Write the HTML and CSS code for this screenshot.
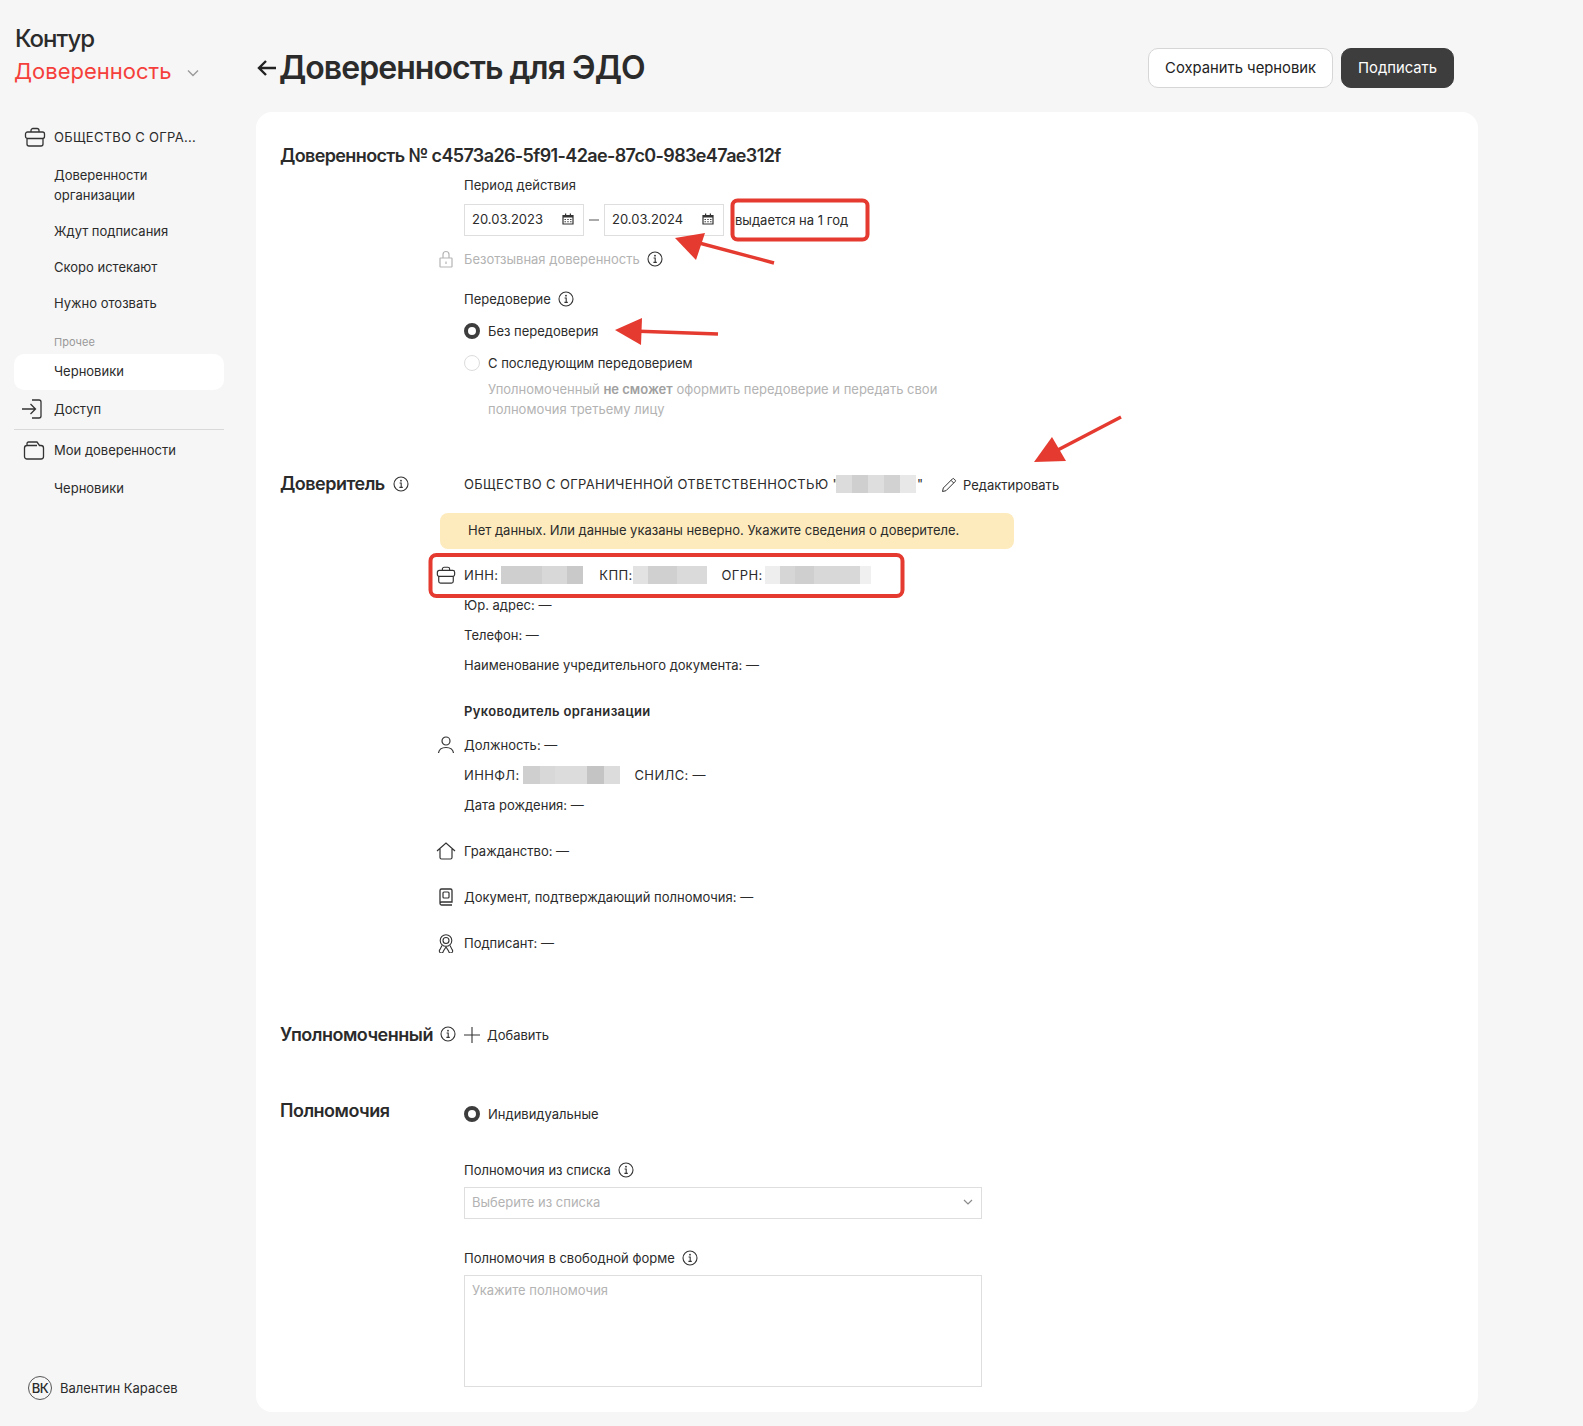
FILE: index.html
```html
<!DOCTYPE html>
<html lang="ru">
<head>
<meta charset="utf-8">
<title>Доверенность для ЭДО</title>
<link rel="stylesheet" href="styles.css">
</head>
<body>
<svg width="0" height="0" class="defs">
  <defs>
    <symbol id="i-info" viewBox="0 0 16 16"><circle cx="8" cy="8" r="7" fill="none" stroke="currentColor" stroke-width="1.1"/><path d="M6.6 7h1.6v4.2M6.4 11.4h3.4" fill="none" stroke="currentColor" stroke-width="1.1"/><circle cx="8" cy="4.7" r=".9" fill="currentColor"/></symbol>
    <symbol id="i-case" viewBox="0 0 22 22"><path d="M7 6V4.5A2 2 0 0 1 9 2.5h4a2 2 0 0 1 2 2V6M3.5 6h15a2 2 0 0 1 2 2v2.500a2 2 0 0 1-2 2h-15a2 2 0 0 1-2-2V8a2 2 0 0 1 2-2ZM3 12.300V18a2 2 0 0 0 2 2h12a2 2 0 0 0 2-2v-5.700" fill="none" stroke="currentColor" stroke-width="1.300"/></symbol>
    <symbol id="i-cal" viewBox="0 0 12 12"><path d="M1 2.500h10V11H1z" fill="#fff" stroke="currentColor" stroke-width="1.200"/><path d="M1 2h10v2.500H1zM3 .5h1.200V3H3zM7.800 .5H9V3H7.800z" fill="currentColor"/><path d="M2.500 6h1.400v1H2.500zM5.300 6h1.400v1H5.300zM8.100 6h1.400v1H8.100zM2.500 8.300h1.400v1H2.500zM5.300 8.300h1.400v1H5.300zM8.100 8.300h1.400v1H8.100z" fill="currentColor"/></symbol>
  </defs>
</svg>

<div class="app">
  <aside class="side">
    <div class="brand">Контур</div>
    <div class="product">
      <span>Доверенность</span>
      <svg class="product-chevron" width="12" height="8" viewBox="0 0 12 8"><path d="M1 1.500l5 5 5-5" fill="none" stroke="#9a9a9a" stroke-width="1.400"/></svg>
    </div>
    <div class="nav-head nav-head--org"><svg class="nav-icon" width="22" height="22"><use href="#i-case"/></svg><span class="caps caps--side">ОБЩЕСТВО С ОГРА...</span></div>
    <div class="nav-item nav-item--first">Доверенности организации</div>
    <div class="nav-item nav-item--next">Ждут подписания</div>
    <div class="nav-item nav-item--next">Скоро истекают</div>
    <div class="nav-item nav-item--next">Нужно отозвать</div>
    <div class="nav-caption">Прочее</div>
    <div class="nav-active">Черновики</div>
    <div class="nav-head nav-head--access">
      <svg class="nav-icon" width="22" height="22" viewBox="0 0 22 22"><path d="M1 11h13M9.500 6l5 5-5 5M11 2h7a2 2 0 0 1 2 2v14a2 2 0 0 1-2 2h-7" fill="none" stroke="currentColor" stroke-width="1.300"/></svg>
      <span>Доступ</span>
    </div>
    <div class="nav-divider"></div>
    <div class="nav-head">
      <svg class="nav-icon" width="22" height="22" viewBox="0 0 22 22"><path d="M4 7V4.500A1.500 1.500 0 0 1 5.500 3h8.500l2.500 3.500H18a2.500 2.500 0 0 1 2.500 2.500v8.500A2.500 2.500 0 0 1 18 20H4a2.500 2.500 0 0 1-2.500-2.500V9A2.500 2.500 0 0 1 4 6.500h10" fill="none" stroke="currentColor" stroke-width="1.300"/></svg>
      <span>Мои доверенности</span>
    </div>
    <div class="nav-item nav-item--last">Черновики</div>
    <div class="user"><span class="avatar">ВК</span><span>Валентин Карасев</span></div>
  </aside>

  <main class="main">
    <header class="top">
      <svg class="back" width="21" height="18" viewBox="0 0 21 18"><path d="M20 9H3M10 2L3 9l7 7" fill="none" stroke="#222" stroke-width="2.400"/></svg>
      <h1 class="title">Доверенность для ЭДО</h1>
      <div class="actions">
        <button class="btn">Сохранить черновик</button>
        <button class="btn btn--dark">Подписать</button>
      </div>
    </header>

    <section class="card">
      <h2 class="doc-no">Доверенность № c4573a26-5f91-42ae-87c0-983e47ae312f</h2>

      <div class="offset">
        <div class="label label--period">Период действия</div>
        <div class="dates">
          <div class="date"><span>20.03.2023</span><svg class="cal" width="12" height="12"><use href="#i-cal"/></svg></div>
          <span class="dash"></span>
          <div class="date"><span>20.03.2024</span><svg class="cal" width="12" height="12"><use href="#i-cal"/></svg></div>
          <span class="term">выдается на 1 год</span>
        </div>
        <div class="row row--icon row--irrevocable">
          <svg class="row-icon row-icon--muted" width="20" height="20" viewBox="0 0 20 20"><path d="M7 9V5.500a3 3 0 0 1 6 0V9M4.500 9h11a.5.5 0 0 1 .5.500v8a.5.5 0 0 1-.5.500h-11a.5.5 0 0 1-.5-.500v-8a.5.5 0 0 1 .5-.500ZM10 12.500v2.500" fill="none" stroke="currentColor" stroke-width="1.200"/></svg>
          <span class="muted">Безотзывная доверенность</span>
          <svg class="info info--near" width="16" height="16"><use href="#i-info"/></svg>
        </div>
        <div class="label label--trust">Передоверие<svg class="info info--near" width="16" height="16"><use href="#i-info"/></svg></div>
        <div class="radio-row radio-row--a"><span class="radio radio--on"></span><span>Без передоверия</span></div>
        <div class="radio-row radio-row--b"><span class="radio"></span><span>С последующим передоверием</span></div>
        <p class="hint">Уполномоченный <b>не сможет</b> оформить передоверие и передать свои<br>полномочия третьему лицу</p>
      </div>

      <div class="section section--principal">
        <div class="sec-title"><h3 class="h3">Доверитель</h3><svg class="info" width="16" height="16"><use href="#i-info"/></svg></div>
        <div class="sec-body">
          <div class="org-line">
            <span class="caps">ОБЩЕСТВО С ОГРАНИЧЕННОЙ ОТВЕТСТВЕННОСТЬЮ "</span><span class="blur blur--org"></span><span class="quote">"</span>
            <svg class="pencil" width="16" height="16" viewBox="0 0 16 16"><path d="M1.500 14.500l.8-3.500L11.500 1.800a1 1 0 0 1 1.400 0l1.300 1.300a1 1 0 0 1 0 1.400L5 13.700l-3.500.8ZM10 3.300l2.700 2.700" fill="none" stroke="#333" stroke-width="1"/></svg>
            <span class="edit">Редактировать</span>
          </div>
          <div class="warn">Нет данных. Или данные указаны неверно. Укажите сведения о доверителе.</div>
          <div class="row row--icon row--ids">
            <svg class="row-icon" width="20" height="20"><use href="#i-case"/></svg>
            <span class="caps">ИНН:</span><span class="blur blur--inn"></span>
            <span class="caps kpp">КПП:</span><span class="blur blur--kpp"></span>
            <span class="caps ogrn">ОГРН:</span><span class="blur blur--ogrn"></span>
          </div>
          <div class="row row--gap10">Юр. адрес: —</div>
          <div class="row row--gap10">Телефон: —</div>
          <div class="row row--gap10">Наименование учредительного документа: —</div>
          <div class="row row--boss"><b class="semi">Руководитель организации</b></div>
          <div class="row row--icon row--post">
            <svg class="row-icon" width="20" height="20" viewBox="0 0 20 20"><circle cx="10" cy="6" r="4" fill="none" stroke="currentColor" stroke-width="1.200"/><path d="M2.500 18c.5-3.800 3.500-5.500 7.500-5.500s7 1.700 7.500 5.500" fill="none" stroke="currentColor" stroke-width="1.200"/></svg>
            <span>Должность: —</span>
          </div>
          <div class="row row--gap10"><span class="caps">ИННФЛ:</span><span class="blur blur--innfl"></span><span class="caps snils">СНИЛС: —</span></div>
          <div class="row row--gap10">Дата рождения: —</div>
          <div class="row row--icon row--group">
            <svg class="row-icon" width="20" height="20" viewBox="0 0 20 20"><path d="M1 10l9-8 9 8M4 8v8.500A1.500 1.500 0 0 0 5.500 18h9a1.500 1.500 0 0 0 1.500-1.500V8" fill="none" stroke="currentColor" stroke-width="1.200"/></svg>
            <span>Гражданство: —</span>
          </div>
          <div class="row row--icon row--group">
            <svg class="row-icon" width="20" height="20" viewBox="0 0 20 20"><path d="M4 16V3.500A1.500 1.500 0 0 1 5.500 2h9A1.500 1.500 0 0 1 16 3.500V15H5.500A1.500 1.500 0 0 0 4 16.500 1.500 1.500 0 0 0 5.500 18H16" fill="none" stroke="currentColor" stroke-width="1.300"/><rect x="7" y="5" width="6" height="6" rx="1" fill="none" stroke="currentColor" stroke-width="1.200"/></svg>
            <span>Документ, подтверждающий полномочия: —</span>
          </div>
          <div class="row row--icon row--group">
            <svg class="row-icon" width="20" height="20" viewBox="0 0 20 20"><circle cx="10" cy="7.500" r="5.800" fill="none" stroke="currentColor" stroke-width="1.100"/><circle cx="10" cy="7.500" r="3" fill="none" stroke="currentColor" stroke-width="1.100"/><path d="M6 12.500L4 16.500a2 2 0 1 0 3.300 1.800L10 14l2.700 4.300a2 2 0 1 0 3.300-1.800l-2-4" fill="none" stroke="currentColor" stroke-width="1.100"/></svg>
            <span>Подписант: —</span>
          </div>
        </div>
      </div>

      <div class="section section--agent">
        <div class="sec-title"><h3 class="h3">Уполномоченный</h3><svg class="info info--agent" width="16" height="16"><use href="#i-info"/></svg></div>
        <div class="add">
          <svg width="16" height="16" viewBox="0 0 16 16"><path d="M8 0v16M0 8h16" stroke="#333" stroke-width="1.100"/></svg>
          <span>Добавить</span>
        </div>
      </div>

      <div class="section section--powers">
        <div class="sec-title"><h3 class="h3">Полномочия</h3></div>
        <div class="sec-body sec-body--powers">
          <div class="radio-row"><span class="radio radio--on"></span><span>Индивидуальные</span></div>
          <div class="label label--list">Полномочия из списка<svg class="info info--near" width="16" height="16"><use href="#i-info"/></svg></div>
          <div class="select"><span>Выберите из списка</span><svg width="10" height="6" viewBox="0 0 10 6"><path d="M1 1l4 4 4-4" fill="none" stroke="#8a8a8a" stroke-width="1.200"/></svg></div>
          <div class="label label--free">Полномочия в свободной форме<svg class="info info--near" width="16" height="16"><use href="#i-info"/></svg></div>
          <div class="textarea">Укажите полномочия</div>
        </div>
      </div>
    </section>
  </main>
</div>

<svg class="marks" width="1583" height="1426" viewBox="0 0 1583 1426">
  <rect x="732.500" y="200.500" width="135" height="39" rx="5" fill="none" stroke="#e53a2f" stroke-width="4"/>
  <rect x="430.500" y="555" width="472" height="41" rx="6" fill="none" stroke="#e53a2f" stroke-width="4"/>
  <path d="M774 263L688 240" stroke="#e53a2f" stroke-width="3.400"/>
  <polygon points="675,238 705,233 696,260" fill="#e53a2f"/>
  <path d="M718 334L632 331" stroke="#e53a2f" stroke-width="3.400"/>
  <polygon points="615,330 642,318 641,345" fill="#e53a2f"/>
  <path d="M1121 417L1052 453" stroke="#e53a2f" stroke-width="3.400"/>
  <polygon points="1034,462 1052,437 1066,461" fill="#e53a2f"/>
</svg>
</body>
</html>
```
FILE: styles.css
```css
* { box-sizing: border-box; }
html, body { margin: 0; padding: 0; }
body {
  position: relative;
  width: 1583px;
  height: 1426px;
  overflow: hidden;
  background: #f6f6f6;
  color: #2b2b2b;
  font: 13px/20px Inter, "Noto Sans", sans-serif;
}
.defs { position: absolute; }
.app { display: flex; height: 1426px; }
.caps { letter-spacing: .36px; }
.caps--side { letter-spacing: .28px; }

/* sidebar */
.side { width: 256px; flex: none; display: flex; flex-direction: column; padding: 23px 32px 26px 14px; }
.brand { font-size: 24px; line-height: 32px; font-weight: 500; letter-spacing: -1px; margin-left: 1px; }
.product { display: flex; align-items: center; font-size: 22px; line-height: 32px; color: #f53f3b; }
.product-chevron { margin-left: 16px; margin-top: 3px; }
.nav-head { display: flex; align-items: center; height: 20px; padding-left: 9px; gap: 9px; margin-top: 10px; }
.nav-head--org { margin-top: 40px; padding-left: 10px; gap: 8px; }
.nav-head--access { margin-top: 9px; padding-left: 7px; gap: 11px; }
.nav-icon { flex: none; color: #333; }
.nav-item { padding-left: 40px; padding-right: 50px; }
.nav-item--first { margin-top: 18px; }
.nav-item--next { margin-top: 16px; padding-right: 0; }
.nav-item--last { margin-top: 18px; padding-right: 0; }
.nav-caption { padding-left: 40px; margin-top: 19px; font-size: 11px; color: #999; }
.nav-active { margin-top: 2px; height: 36px; line-height: 34px; padding-left: 40px; background: #fff; border-radius: 10px; }
.nav-divider { height: 1px; background: #d9d9d9; margin-top: 10px; }
.user { margin-top: auto; display: flex; align-items: center; gap: 8px; padding-left: 14px; }
.avatar { width: 24px; height: 24px; border: 1px solid #555; border-radius: 50%; display: flex; align-items: center; justify-content: center; font-size: 13px; font-weight: 500; letter-spacing: -.4px; }

/* main */
.main { width: 1222px; flex: none; }
.top { display: flex; align-items: center; height: 40px; margin-top: 48px; margin-bottom: 24px; padding-right: 24px; }
.back { flex: none; margin-right: 2px; }
.title { margin: 0; font-size: 32px; line-height: 40px; font-weight: 600; letter-spacing: -.95px; }
.actions { margin-left: auto; display: flex; gap: 8px; }
.btn { height: 40px; padding: 0 16px; border: 1px solid #d6d6d6; border-radius: 10px; background: #fff; color: #222; font: 14.800px/20px Inter, sans-serif; }
.btn--dark { background: #3d3d3d; border-color: #3d3d3d; color: #fff; }

.card { background: #fff; border-radius: 16px; padding: 32px 24px 25px; }
.doc-no { margin: 0; font-size: 18px; line-height: 24px; font-weight: 600; letter-spacing: -.63px; }
.offset { padding-left: 184px; }
.label { display: flex; align-items: center; height: 20px; }
.label--period { margin-top: 7px; }
.label--trust { margin-top: 20px; }
.label--list { margin-top: 36px; }
.label--free { margin-top: 29px; }
.dates { display: flex; align-items: center; margin-top: 9px; }
.date { width: 120px; height: 32px; border: 1px solid #dedede; display: flex; align-items: center; justify-content: space-between; padding: 0 9px 2px 7px; }
.cal { color: #333; }
.dash { width: 10px; height: 2px; background: #aaa; margin: 0 5px; }
.term { margin-left: 11px; }
.row { display: flex; align-items: center; min-height: 20px; }
.row--icon { margin-left: -28px; }
.row-icon { flex: none; margin-right: 8px; color: #333; }
.row-icon--muted { color: #b5b5b5; }
.row--irrevocable { margin-top: 13px; }
.muted { color: #b3b3b3; }
.info { flex: none; color: #333; margin-left: 8px; }
.info--near { margin-left: 7px; }
.radio-row { display: flex; align-items: center; height: 20px; gap: 8px; }
.radio-row--a { margin-top: 12px; }
.radio-row--b { margin-top: 12px; }
.radio { width: 16px; height: 16px; border-radius: 50%; border: 1px solid #dcdcdc; background: #fff; flex: none; }
.radio--on { border: 4px solid #3d3d3d; }
.hint { margin: 6px 0 0 24px; color: #b3b3b3; }
.hint b { font-weight: 600; color: #a0a0a0; }

.section { display: grid; grid-template-columns: 184px 1fr; }
.section--principal { margin-top: 53px; }
.section--agent { margin-top: 70px; }
.section--powers { margin-top: 52px; }
.sec-title { display: flex; align-items: center; height: 24px; }
.h3 { margin: 0; font-size: 18px; line-height: 24px; font-weight: 600; letter-spacing: -.5px; }
.info--agent { margin-left: 7px; margin-top: -2px; }
.org-line { display: flex; align-items: center; height: 24px; }
.quote { margin-left: 1px; }
.pencil { margin-left: 18px; margin-top: 2px; flex: none; }
.edit { margin-left: 6px; margin-top: 2px; }
.blur { display: inline-block; height: 18px; }
.blur--org { width: 80px; margin-left: -3px; background: linear-gradient(90deg, #dcdcdc 0 20%, #cfcfcf 20% 40%, #dedede 40% 60%, #d2d2d2 60% 80%, #e8e8e8 80%); }
.blur--inn { width: 82px; margin-left: 3px; background: linear-gradient(90deg, #cfcfcf 0 50%, #d8d8d8 50% 80%, #c9c9c9 80%); }
.blur--kpp { width: 74px; background: linear-gradient(90deg, #e2e2e2 0 20%, #d0d0d0 20% 60%, #dadada 60%); }
.blur--ogrn { width: 106px; margin-left: 2px; background: linear-gradient(90deg, #eeeeee 0 14%, #d6d6d6 14% 28%, #cfcfcf 28% 46%, #d8d8d8 46% 90%, #f0f0f0 90%); }
.blur--innfl { width: 97px; margin-left: 3px; background: linear-gradient(90deg, #cfcfcf 0 18%, #d8d8d8 18% 33%, #dcdcdc 33% 66%, #c4c4c4 66% 83%, #dcdcdc 83%); }
.kpp { margin-left: 16px; }
.ogrn { margin-left: 15px; }
.snils { margin-left: 15px; }
.warn { margin-top: 17px; margin-left: -24px; width: 574px; height: 36px; line-height: 34px; padding-left: 28px; background: #fdebbd; border-radius: 8px; }
.row--ids { margin-top: 16px; }
.row--gap10 { margin-top: 10px; }
.row--boss { margin-top: 26px; }
.row--post { margin-top: 14px; }
.row--group { margin-top: 26px; }
.semi { font-weight: 600; letter-spacing: .33px; }
.add { display: flex; align-items: center; gap: 7px; height: 24px; }
.sec-body--powers { padding-top: 5px; }
.select { margin-top: 7px; width: 518px; height: 32px; border: 1px solid #dedede; display: flex; align-items: center; justify-content: space-between; padding: 0 8px 2px 7px; color: #b3b3b3; }
.textarea { margin-top: 7px; width: 518px; height: 112px; border: 1px solid #dedede; padding: 4px 7px; color: #b3b3b3; }

/* reviewer's annotations drawn over the screenshot */
.marks { position: absolute; left: 0; top: 0; pointer-events: none; }
```
